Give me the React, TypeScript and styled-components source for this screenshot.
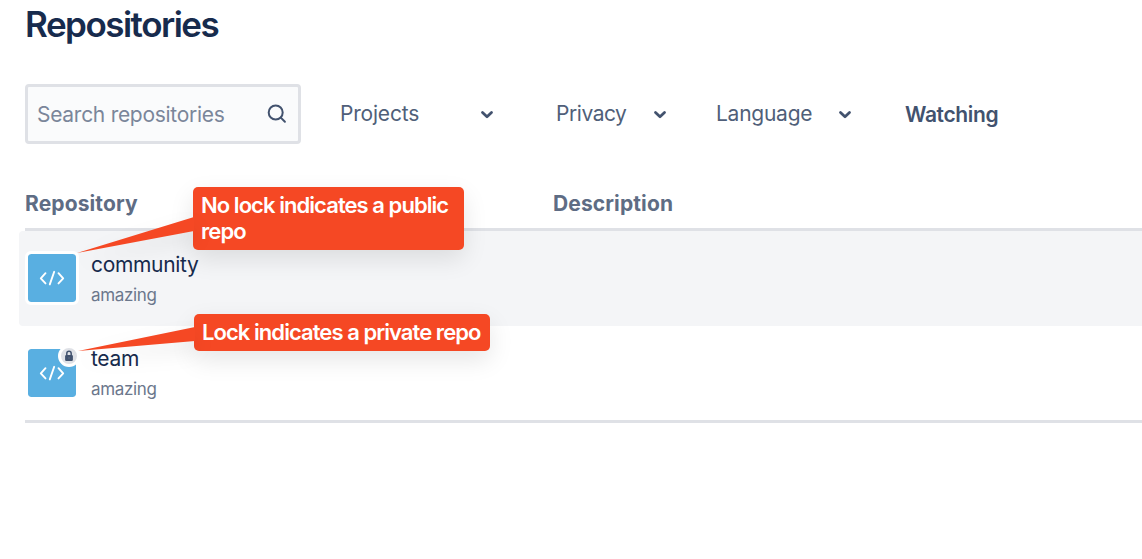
import React from "react";
import styled, { createGlobalStyle } from "styled-components";

const GlobalStyle = createGlobalStyle`
  * { box-sizing: border-box; }
  body {
    margin: 0;
    background: #fff;
    color: #172b4d;
    font-family: Inter, "Liberation Sans", sans-serif;
    overflow: hidden;
  }
`;

const Page = styled.main`
  position: relative;
  height: 559px;
  padding-left: 25px;
  overflow: hidden;
`;

const Title = styled.h1`
  margin: 0;
  padding-top: 3px;
  height: 84px;
  font-size: 35px;
  line-height: 42px;
  font-weight: 600;
  letter-spacing: -1.5px;
`;

const Filters = styled.div`
  display: flex;
  align-items: center;
  height: 60px;
`;

const Search = styled.label`
  display: flex;
  align-items: center;
  justify-content: space-between;
  width: 276px;
  height: 60px;
  margin-right: 39px;
  padding: 0 11px 0 9px;
  border: 3px solid #dfe1e6;
  border-radius: 4px;
  background: #fafbfc;
  color: #7a869a;
  font-size: 21px;
  letter-spacing: -0.28px;
`;

const Select = styled.div<{ $width: number; $gap: number; $spacing?: number }>`
  display: flex;
  align-items: center;
  justify-content: space-between;
  width: ${(p) => p.$width}px;
  margin-right: ${(p) => p.$gap}px;
  color: #505f79;
  font-size: 21px;
  line-height: 28px;
  letter-spacing: ${(p) => p.$spacing ?? -0.2}px;
`;

const Watching = styled.span`
  color: #42526e;
  font-size: 21px;
  font-weight: 600;
  letter-spacing: -0.35px;
  padding-top: 1px;
`;

const Header = styled.div`
  display: flex;
  width: 1117px;
  height: 87px;
  padding-top: 46px;
  border-bottom: 3px solid #dfe1e6;
  color: #5e6c84;
  font-size: 21px;
  line-height: 28px;
  font-weight: 700;
  letter-spacing: 0.12px;
`;

const HeaderCell = styled.span<{ $width?: number }>`
  width: ${(p) => (p.$width ? `${p.$width}px` : "auto")};
`;

const Row = styled.div<{ $active?: boolean }>`
  display: flex;
  height: ${(p) => (p.$active ? 95 : 94)}px;
  margin-left: -6px;
  padding: 20px 0 0 6px;
  border-radius: 4px 0 0 4px;
  background: ${(p) => (p.$active ? "#f4f5f7" : "#fff")};
`;

const Avatar = styled.div`
  position: relative;
  display: flex;
  align-items: center;
  justify-content: center;
  width: 54px;
  height: 54px;
  margin-right: 12px;
  border: 3px solid #fff;
  border-radius: 6px;
  background: #59afe1;
  background-clip: padding-box;
`;

const Badge = styled.span`
  position: absolute;
  top: -4px;
  right: -4px;
  display: flex;
  align-items: center;
  justify-content: center;
  width: 22px;
  height: 22px;
  border: 3px solid #fff;
  border-radius: 50%;
  background: #dfe1e6;
`;

const Names = styled.div<{ $raised?: boolean }>`
  display: flex;
  flex-direction: column;
  margin-top: ${(p) => (p.$raised ? -1 : 0)}px;
`;

const RepoName = styled.span`
  font-size: 21px;
  line-height: 28px;
  letter-spacing: -0.33px;
`;

const Project = styled.span`
  margin-top: 5px;
  color: #6b778c;
  font-size: 17px;
  line-height: 22px;
  letter-spacing: -0.35px;
`;

const TableEnd = styled.div`
  height: 3px;
  background: #dfe1e6;
`;

const Callout = styled.div<{ $x: number; $y: number; $w: number; $h: number }>`
  position: absolute;
  left: ${(p) => p.$x}px;
  top: ${(p) => p.$y}px;
  width: ${(p) => p.$w}px;
  height: ${(p) => p.$h}px;
  padding: 5px 8px;
  border-radius: 5px;
  background: #f54824;
  box-shadow: 0 9px 24px rgba(0, 0, 0, 0.1);
  color: #fff;
  font-size: 22px;
  line-height: 26px;
  font-weight: 600;
  letter-spacing: -0.94px;
  white-space: pre;
`;

const Pointer = styled.svg`
  position: absolute;
  left: -119px;
  top: 0;
  filter: drop-shadow(0 9px 10px rgba(0, 0, 0, 0.08));
  overflow: visible;
`;

const Chevron = () => (
  <svg width="14" height="10" viewBox="0 0 14 10" fill="none" stroke="#42526e" strokeWidth="2.8" strokeLinecap="round" strokeLinejoin="round">
    <path d="M2.5 3.5 7 7.7 11.5 3.5" />
  </svg>
);

const SearchIcon = () => (
  <svg width="20" height="20" viewBox="0 0 20 20" fill="none" stroke="#42526e" strokeWidth="2" strokeLinecap="round">
    <circle cx="8.7" cy="8.5" r="7" />
    <path d="m13.8 13.6 4.1 4.1" />
  </svg>
);

const CodeIcon = () => (
  <svg width="26" height="16" viewBox="0 0 26 16" fill="none" stroke="#fff" strokeWidth="1.9" strokeLinecap="round" strokeLinejoin="round">
    <path d="M6.5 3.2 1.8 8.3l4.7 5.1M19.5 3.2l4.7 5.1-4.7 5.1M15.2 1.8l-4.4 12.6" />
  </svg>
);

const LockIcon = () => (
  <svg width="10" height="12" viewBox="0 0 10 12">
    <path d="M2.8 5.5V3.4a2.2 2.2 0 0 1 4.4 0v2.1" fill="none" stroke="#42526e" strokeWidth="1.5" />
    <rect x="1.1" y="5" width="7.8" height="6" rx="1.2" fill="#42526e" />
    <circle cx="5" cy="8" r=".7" fill="#6b778c" />
  </svg>
);

function Repository({ name, active, locked }: { name: string; active?: boolean; locked?: boolean }) {
  return (
    <Row $active={active}>
      <Avatar>
        <CodeIcon />
        {locked && <Badge><LockIcon /></Badge>}
      </Avatar>
      <Names $raised={locked}>
        <RepoName>{name}</RepoName>
        <Project>amazing</Project>
      </Names>
    </Row>
  );
}

export default function App() {
  return (
    <>
      <GlobalStyle />
      <Page>
        <Title>Repositories</Title>
        <Filters>
          <Search>Search repositories<SearchIcon /></Search>
          <Select $width={154} $gap={62}>Projects<Chevron /></Select>
          <Select $width={111} $gap={49} $spacing={-0.45}>Privacy<Chevron /></Select>
          <Select $width={136} $gap={53} $spacing={-0.25}>Language<Chevron /></Select>
          <Watching>Watching</Watching>
        </Filters>
        <Header>
          <HeaderCell $width={528}>Repository</HeaderCell>
          <HeaderCell>Description</HeaderCell>
        </Header>
        <Repository name="community" active />
        <Repository name="team" locked />
        <TableEnd />
        <Callout $x={193} $y={187} $w={271} $h={63}>
          <Pointer width="120" height="67"><path d="M3 66 120 30V44Z" fill="#f54824" /></Pointer>
          {"No lock indicates a public\nrepo"}
        </Callout>
        <Callout $x={194} $y={314} $w={296} $h={37}>
          <Pointer width="120" height="37"><path d="M3 37 120 13V27Z" fill="#f54824" /></Pointer>
          Lock indicates a private repo
        </Callout>
      </Page>
    </>
  );
}
